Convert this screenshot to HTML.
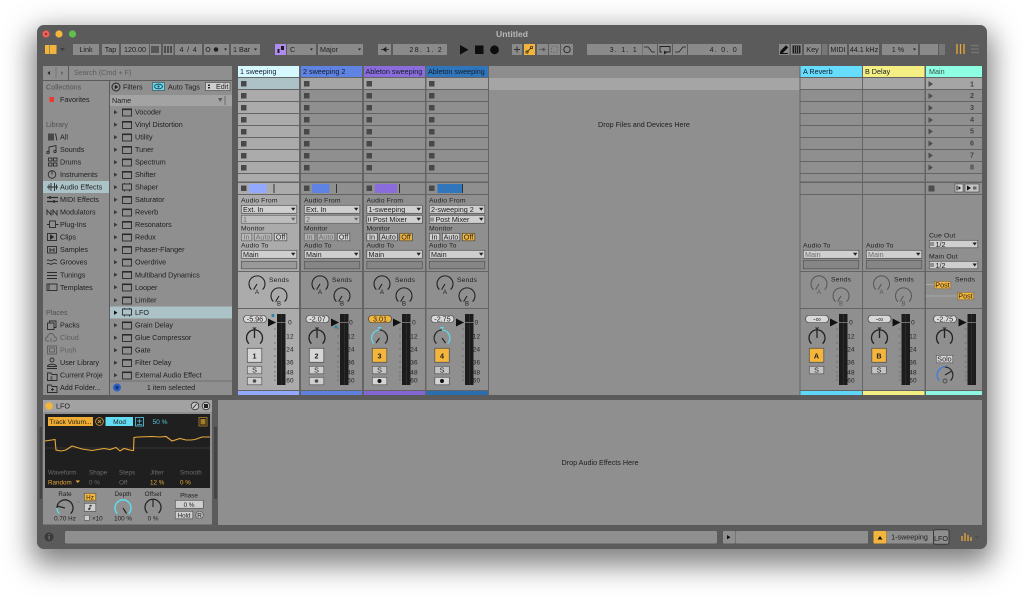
<!DOCTYPE html>
<html><head><meta charset="utf-8"><title>Untitled</title>
<style>
html,body{margin:0;padding:0;width:1024px;height:598px;overflow:hidden;background:#fff}
#w{position:absolute;left:37px;top:25px;width:950px;height:524px;border-radius:7px;background:#5b5b5b;box-shadow:0 11px 28px 5px rgba(0,0,0,.5)}
svg{position:absolute;left:0;top:0;filter:blur(.35px)}
text{font-family:"Liberation Sans",sans-serif;font-size:7.2px;fill:#1e1e1e}
.m{text-anchor:middle}.e{text-anchor:end}
.b{font-weight:bold}
.d{fill:#6c6c6c}
.s{font-size:6.8px;fill:#222;letter-spacing:.15px}
.h{font-size:7.2px;fill:#141e2c}
.q{fill:#6c6c6c}
.k{fill:none;stroke:#222;stroke-width:1.1}
.dv text{font-size:6.3px}
</style></head><body>
<div id="w"></div>
<svg width="1024" height="598" viewBox="0 0 1024 598" xmlns="http://www.w3.org/2000/svg">
<defs>
<g id="di"><rect x="0.5" y="0.5" width="9" height="7" fill="none" stroke="#2a2a2a" stroke-width=".9"/><rect x="0" y="0" width="10" height="1.6" fill="#2a2a2a"/></g>
<g id="dp"><rect x="0.5" y="1" width="9" height="6" fill="none" stroke="#2a2a2a" stroke-width=".9"/><path d="M2.5 0v1M7.5 0v1M2.5 7v1.5M7.5 7v1.5" stroke="#2a2a2a" stroke-width=".9"/></g>
<path id="tr" d="M0 0l3.5 2.2L0 4.400z" fill="#3a3a3a"/>
<g id="dd"><rect x=".3" y=".3" width="55.500" height="8" fill="#cfcfcf" stroke="#4f4f4f" stroke-width=".7"/><path d="M50 2.700h4.400l-2.200 3z" fill="#1f1f1f"/></g>
<g id="dds"><rect x=".3" y=".3" width="48.500" height="7.500" fill="#cfcfcf" stroke="#4f4f4f" stroke-width=".7"/><path d="M43.500 2.500h4.400l-2.200 3z" fill="#1f1f1f"/></g>
<g id="ddo"><rect x=".3" y=".3" width="55.500" height="8" fill="#bdbdbd" stroke="#666" stroke-width=".7"/><path d="M50 2.700h4.400l-2.200 3z" fill="#666"/></g>
<g id="send"><path class="k" d="M-5.600 5.600A8 8 0 1 1 5.600 5.600"/><path d="M0 0L-3.400 5.600" stroke="#222" stroke-width="1.100"/></g>
<g id="sendg"><path d="M-5.600 5.600A8 8 0 1 1 5.600 5.600" fill="none" stroke="#555" stroke-width="1"/><path d="M0 0L-3.400 5.600" stroke="#555" stroke-width="1"/></g>
<g id="pan"><path class="k" d="M-5.600 5.600A8 8 0 1 1 5.600 5.600" style="stroke-width:1.300"/><path d="M0 0V-8" stroke="#222" stroke-width="1.300"/><path d="M-2.200 -10.500h4.400l-2.200 2.200z" fill="#2a2a2a"/></g>
<g id="mt"><rect x="0" y="0" width="8.500" height="71" fill="#1c1c1c"/><rect x="4" y="0" width=".5" height="71" fill="#3a3a3a"/><rect x="0" y="8" width="8.500" height=".9" fill="#777"/><path d="M-3 8.500h2M-3 15h2M-3 22h2M-3 29h2M-3 35h2M-3 42h2M-3 48h2M-3 53h2M-3 58h2M-3 62h2M-3 66h2" stroke="#666" stroke-width=".7"/><path d="M-9 4.500l8 4-8 4z" fill="#111"/></g>
<path id="t2" d="M0 0l4.500 3L0 6z" fill="#4d4d4d"/>
</defs>

<!-- title -->
<circle cx="46" cy="34" r="3.600" fill="#ee5f55"/><circle cx="46" cy="34" r="1" fill="#8a2018"/>
<circle cx="59" cy="34" r="3.600" fill="#f4b73d"/><circle cx="72.500" cy="34" r="3.600" fill="#5fc04c"/>
<text x="512" y="37" class="m b" style="font-size:8.600px;fill:#b9b9b9">Untitled</text>

<!-- toolbar -->
<g fill="#8a8a8a">
<rect x="73" y="44" width="26" height="11"/><rect x="102" y="44" width="17" height="11"/><rect x="121" y="44" width="28" height="11"/><rect x="150" y="44" width="11" height="11"/><rect x="163" y="44" width="10.500" height="11"/><rect x="175" y="44" width="27" height="11"/><rect x="204" y="44" width="25" height="11"/><rect x="231" y="44" width="29" height="11"/>
<rect x="287" y="44" width="29" height="11"/><rect x="318" y="44" width="45" height="11"/><rect x="378" y="44" width="13" height="11"/><rect x="393" y="44" width="54" height="11"/>
<rect x="512" y="44" width="10" height="11"/><rect x="537" y="44" width="11" height="11"/><rect x="549" y="44" width="11" height="11"/><rect x="561" y="44" width="12" height="11"/>
<rect x="587" y="44" width="55" height="11"/><rect x="642.500" y="44" width="14.500" height="11"/><rect x="658" y="44" width="14" height="11"/><rect x="673" y="44" width="14" height="11"/><rect x="688" y="44" width="54" height="11"/>
<rect x="779" y="44" width="10.500" height="11"/><rect x="791" y="44" width="11" height="11"/><rect x="804" y="44" width="17" height="11"/><rect x="822" y="44" width="5.500" height="11" fill="#777"/><rect x="829" y="44" width="18" height="11"/><rect x="849" y="44" width="30" height="11"/><rect x="882" y="44" width="36" height="11"/><rect x="920" y="44" width="18" height="11"/><rect x="939" y="44" width="6" height="11" fill="#777"/>
</g>
<rect x="45" y="45" width="4.500" height="9" fill="#f1b43c"/><rect x="50" y="45" width="6.500" height="9" fill="#f1b43c"/>
<path d="M60 48h5l-2.500 3z" fill="#3f3f3f"/>
<text x="86" y="52" class="m">Link</text><text x="110.500" y="52" class="m">Tap</text><text x="135" y="52" class="m">120.00</text>
<path d="M152 46v7M154 46v7M156 46v7M158 46v7" stroke="#222" stroke-width="1"/><path d="M165 46v7M168 46v7M171 46v7" stroke="#222" stroke-width="1.200"/>
<text x="188.500" y="52" class="m" style="letter-spacing:.8px">4 / 4</text>
<circle cx="208" cy="49.500" r="2" fill="none" stroke="#222" stroke-width=".8"/><circle cx="216" cy="49.500" r="2.300" fill="#222"/><path d="M224 48.500h3l-1.500 2z" fill="#222"/>
<text x="233" y="52">1 Bar</text><path d="M254 48.500h3l-1.500 2z" fill="#222"/>
<rect x="275" y="44" width="11" height="11" fill="#b18cf0"/><path d="M277.500 49h2v4h-2zM281 46h3v4h-3z" fill="#1c1c1c"/>
<text x="290" y="52">C</text><path d="M310 48.500h3l-1.500 2z" fill="#222"/><text x="320" y="52">Major</text><path d="M358 48.500h3l-1.500 2z" fill="#222"/>
<path d="M381 49.500h8M386 47.500l-3 2 3 2z" stroke="#222" stroke-width=".8" fill="#222"/>
<text x="443" y="52" class="e" style="letter-spacing:1.200px">28. 1. 2</text>
<path d="M460 45l8.500 4.800-8.500 4.800z" fill="#0e0e0e"/><rect x="475" y="45.500" width="8.500" height="8.500" fill="#0e0e0e"/><circle cx="494.500" cy="49.800" r="4.400" fill="#0e0e0e"/>
<path d="M514 49.500h6M517 46.500v6" stroke="#333" stroke-width="1"/>
<rect x="524" y="44" width="11" height="11" fill="#f1b43c"/><path d="M527 52l4-4" stroke="#222" stroke-width=".8"/><circle cx="527" cy="52" r="1.200" fill="none" stroke="#222" stroke-width=".7"/><circle cx="531.500" cy="47.500" r="1.200" fill="none" stroke="#222" stroke-width=".7"/>
<path d="M539 49.500h7M542 49.500l2-1.500v3z" stroke="#555" stroke-width=".8" fill="#555"/>
<rect x="551.500" y="46.500" width="6" height="6" fill="none" stroke="#666" stroke-width=".8" stroke-dasharray="1.500 1.500"/>
<circle cx="567" cy="49.500" r="3.200" fill="none" stroke="#222" stroke-width=".9"/>
<text x="638" y="52" class="e" style="letter-spacing:1.200px">3. 1. 1</text>
<path d="M644 47h4l4 5h3" fill="none" stroke="#222" stroke-width=".8"/>
<path d="M665 52h5v-5.500h-10v5.500h2" fill="none" stroke="#222" stroke-width=".9"/><path d="M664 50.500v4l3-2z" fill="#222"/>
<path d="M675 52h4l4-5h3" fill="none" stroke="#222" stroke-width=".8"/>
<text x="738" y="52" class="e" style="letter-spacing:1.200px">4. 0. 0</text>
<path d="M781 51l5-5 1.500 1.500-5 5-2 .5zM780 53.500h8" stroke="#111" stroke-width="1" fill="#111"/>
<rect x="792.500" y="45.500" width="8" height="8" fill="#1c1c1c"/><path d="M794.500 46v7M796.500 46v7M798.500 46v7" stroke="#9a9a9a" stroke-width=".6"/>
<text x="812.500" y="52" class="m">Key</text><text x="838" y="52" class="m">MIDI</text><text x="864" y="52" class="m">44.1 kHz</text>
<text x="898" y="52" class="m">1 %</text><path d="M913 48.500h3l-1.500 2z" fill="#222"/>
<path d="M957 44v10M960.500 44v10M964 44v10" stroke="#e8a93a" stroke-width="1.300"/>
<path d="M971 45.500h8M971 49h8M971 52.500h8" stroke="#767676" stroke-width="1.300"/>

<!-- browser -->
<rect x="43" y="66" width="25" height="14" fill="#8f8f8f"/><rect x="69" y="66" width="163" height="14" fill="#8f8f8f"/>
<path d="M50 71l-2.500 2 2.500 2z" fill="#222"/><path d="M56 67v11" stroke="#6a6a6a" stroke-width=".7"/><path d="M61 71l2.500 2-2.500 2z" fill="#666"/>
<text x="74" y="75" style="fill:#5d5d5d">Search (Cmd + F)</text>
<rect x="43" y="81" width="66" height="314" fill="#8f8f8f"/><rect x="110" y="81" width="122" height="314" fill="#8f8f8f"/>
<circle cx="116" cy="87" r="4" fill="none" stroke="#222" stroke-width=".9"/><path d="M114.800 84.800l3.500 2.200-3.500 2.200z" fill="#222"/>
<text x="123" y="89.500">Filters</text>
<rect x="152.500" y="82.500" width="12" height="8" fill="#63d8ee" stroke="#444" stroke-width=".6"/><ellipse cx="158.500" cy="86.500" rx="4" ry="2.300" fill="none" stroke="#234" stroke-width=".8"/><circle cx="158.500" cy="86.500" r="1" fill="#234"/>
<text x="168" y="89.500">Auto Tags</text>
<rect x="205.500" y="82.500" width="24.500" height="8" fill="#cfcfcf" stroke="#444" stroke-width=".6"/><path d="M208 84.500h2v1.500h-2zM208 87h2v1.500h-2z" fill="#222"/><text x="216" y="89">Edit</text>
<rect x="110" y="95" width="122" height="11" fill="#a3a3a3"/><text x="112" y="103">Name</text>
<path d="M218 98h4.500l-2.250 4z" fill="#5c5c5c"/><path d="M225 96v9" stroke="#555" stroke-width=".7"/>

<rect x="43" y="181" width="66" height="12" fill="#abc2c6"/>
<rect x="110" y="306.500" width="122" height="12" fill="#abc2c6"/>
<path d="M110 381h122" stroke="#666" stroke-width=".8"/>

<text x="46" y="89.500" style="fill:#505050">Collections</text>
<rect x="49.500" y="97" width="4.500" height="5" fill="#ee3a2e"/>
<text x="60" y="102">Favorites</text>
<text x="46" y="127" style="fill:#505050">Library</text>
<text x="60" y="139.500">All</text><text x="60" y="152">Sounds</text><text x="60" y="164.500">Drums</text><text x="60" y="177">Instruments</text><text x="60" y="189.500">Audio Effects</text><text x="60" y="202">MIDI Effects</text><text x="60" y="214.500">Modulators</text><text x="60" y="227">Plug-Ins</text><text x="60" y="239.500">Clips</text><text x="60" y="252">Samples</text><text x="60" y="264.500">Grooves</text><text x="60" y="277.500">Tunings</text><text x="60" y="290">Templates</text>
<text x="46" y="315" style="fill:#505050">Places</text>
<text x="60" y="327.500">Packs</text><text x="60" y="340" style="fill:#5f5f5f">Cloud</text><text x="60" y="352.500" style="fill:#5f5f5f">Push</text><text x="60" y="365">User Library</text><text x="60" y="377.500">Current Proje</text><text x="60" y="390">Add Folder...</text>

<!-- sidebar icons -->
<g fill="none" stroke="#2a2a2a" stroke-width=".9">
<path d="M49 133.500v7M51 133.500v7M53 133.500v7" stroke-width="1.400"/><path d="M55.500 133.500l1.500 7"/>
<path d="M49 152.500v-5.500l7-1.500v6"/><circle cx="48" cy="152.500" r="1.200"/><circle cx="55" cy="151.500" r="1.200"/>
<rect x="48.500" y="158" width="3.500" height="3"/><rect x="53.500" y="158" width="3.500" height="3"/><rect x="48.500" y="163" width="3.500" height="3"/><rect x="53.500" y="163" width="3.500" height="3"/>
<circle cx="52" cy="174.500" r="3.800"/><path d="M52 171v3.500"/>
<path d="M47 187h11M49 184.500v5M51 183v8M54.500 183v8M56.500 184.500v5"/>
<path d="M47 197.500h11M47 201.500h11" stroke-width="1.300"/><path d="M50 196v3M54 200v3" stroke-width="1.300"/>
<path d="M47 215v-5l4 5v-5M53 215v-5l4 5v-5"/>
<rect x="49.500" y="221" width="6" height="6.500"/><path d="M47 224.500h2.500M55.500 224.500h3"/>
<rect x="47.500" y="233.500" width="9" height="7"/><path d="M50.500 235l3 2-3 2z" fill="#2a2a2a"/>
<rect x="47.500" y="246.500" width="9" height="6.500"/><path d="M50 250h4M50 248v4M54 248v4"/>
<path d="M47 260.500c2-2 3 1.500 5 0s3-1 5 0M47 264c2-2 3 1.500 5 0s3-1 5 0"/>
<path d="M47 272.500h10M47 275.500h10M47 278.500h10"/>
<rect x="47" y="284" width="10" height="6.500"/><path d="M49 284v6.500"/>
<rect x="47.500" y="323" width="6.500" height="6.500"/><path d="M49.500 323v-2h6.500v6.500h-2"/>
<g stroke="#5c5c5c"><path d="M49 341h-1.500a2 2 0 0 1 0-4 3.500 3.500 0 0 1 7 0 2 2 0 0 1 0 4h-1.500M51 338v4"/><rect x="47.500" y="346" width="9" height="8"/><rect x="49.500" y="348" width="5" height="4"/></g>
<circle cx="52" cy="360" r="2"/><path d="M47.500 366.500c0-3 9-3 9 0zM47 368.500h10"/>
<path d="M47.500 373h3.500l1 1.500h5v6h-9.500z"/><path d="M50.500 377h2M50.500 379h2"/>
<path d="M47.500 385h3.500l1 1.500h5v6h-9.500z"/><path d="M52.500 388v3M51 389.500h3"/>
</g>

<!-- browser list -->
<use href="#tr" x="114" y="110"/><use href="#di" x="122" y="108.500"/><text x="135" y="114.500">Vocoder</text>
<use href="#tr" x="114" y="122.500"/><use href="#di" x="122" y="121"/><text x="135" y="127">Vinyl Distortion</text>
<use href="#tr" x="114" y="135"/><use href="#di" x="122" y="133.500"/><text x="135" y="139.500">Utility</text>
<use href="#tr" x="114" y="147.500"/><use href="#di" x="122" y="146"/><text x="135" y="152">Tuner</text>
<use href="#tr" x="114" y="160"/><use href="#di" x="122" y="158.500"/><text x="135" y="164.500">Spectrum</text>
<use href="#tr" x="114" y="172.500"/><use href="#di" x="122" y="171"/><text x="135" y="177">Shifter</text>
<use href="#tr" x="114" y="185"/><use href="#dp" x="122" y="183"/><text x="135" y="189.500">Shaper</text>
<use href="#tr" x="114" y="197.500"/><use href="#di" x="122" y="196"/><text x="135" y="202">Saturator</text>
<use href="#tr" x="114" y="210"/><use href="#di" x="122" y="208.500"/><text x="135" y="214.500">Reverb</text>
<use href="#tr" x="114" y="222.500"/><use href="#di" x="122" y="221"/><text x="135" y="227">Resonators</text>
<use href="#tr" x="114" y="235"/><use href="#di" x="122" y="233.500"/><text x="135" y="239.500">Redux</text>
<use href="#tr" x="114" y="247.500"/><use href="#di" x="122" y="246"/><text x="135" y="252">Phaser-Flanger</text>
<use href="#tr" x="114" y="260"/><use href="#di" x="122" y="258.500"/><text x="135" y="264.500">Overdrive</text>
<use href="#tr" x="114" y="272.500"/><use href="#di" x="122" y="271"/><text x="135" y="277.500">Multiband Dynamics</text>
<use href="#tr" x="114" y="285"/><use href="#di" x="122" y="283.500"/><text x="135" y="290">Looper</text>
<use href="#tr" x="114" y="298"/><use href="#di" x="122" y="296.500"/><text x="135" y="302.500">Limiter</text>
<path d="M114 310.500l3.500 2.200-3.500 2.200z" fill="#111"/><use href="#dp" x="122" y="308"/><text x="135" y="315">LFO</text>
<use href="#tr" x="114" y="323"/><use href="#di" x="122" y="321.500"/><text x="135" y="327.500">Grain Delay</text>
<use href="#tr" x="114" y="335.500"/><use href="#di" x="122" y="334"/><text x="135" y="340">Glue Compressor</text>
<use href="#tr" x="114" y="348"/><use href="#di" x="122" y="346.500"/><text x="135" y="352.500">Gate</text>
<use href="#tr" x="114" y="360.500"/><use href="#di" x="122" y="359"/><text x="135" y="365">Filter Delay</text>
<use href="#tr" x="114" y="373"/><use href="#di" x="122" y="371.500"/><text x="135" y="377.500">External Audio Effect</text>
<circle cx="117" cy="387.500" r="4" fill="#2b62c4"/><circle cx="117" cy="387.500" r="1.800" fill="#16377c"/>
<text x="171" y="390" class="m">1 item selected</text>

<!-- session base -->
<rect x="238" y="66" width="744" height="329" fill="#646464"/>
<rect x="489" y="66" width="310.500" height="329" fill="#8f8f8f"/>
<rect x="489" y="66" width="310.500" height="12" fill="#8d8d8d"/><rect x="489" y="78" width="310.500" height="12" fill="#a5a5a5"/>
<text x="644" y="127" class="m">Drop Files and Devices Here</text>

<!-- T1 -->
<g>
<rect x="238" y="66" width="61" height="11" fill="#d6f8ff"/><text x="240" y="74" class="h">1 sweeping</text>
<rect x="238" y="78" width="61" height="11" fill="#acc2c6"/>
<g fill="#ababab"><rect x="238" y="90" width="61" height="11"/><rect x="238" y="102" width="61" height="11"/><rect x="238" y="114" width="61" height="11"/><rect x="238" y="126" width="61" height="11"/><rect x="238" y="138" width="61" height="11"/><rect x="238" y="150" width="61" height="11"/><rect x="238" y="162" width="61" height="11"/><rect x="238" y="174" width="61" height="7.500"/><rect x="238" y="183" width="61" height="11"/><rect x="238" y="195" width="61" height="76"/><rect x="238" y="272" width="61" height="36"/><rect x="238" y="309" width="61" height="81"/></g>
<g fill="#484848"><rect x="241" y="81" width="5.500" height="5.500"/><rect x="241" y="93" width="5.500" height="5.500"/><rect x="241" y="105" width="5.500" height="5.500"/><rect x="241" y="117" width="5.500" height="5.500"/><rect x="241" y="129" width="5.500" height="5.500"/><rect x="241" y="141" width="5.500" height="5.500"/><rect x="241" y="153" width="5.500" height="5.500"/><rect x="241" y="165" width="5.500" height="5.500"/><rect x="241" y="185.500" width="5.500" height="5.500"/></g>
<rect x="249" y="184" width="17.500" height="9" fill="#93a8ff"/><rect x="273.500" y="184" width="1" height="9" fill="#333"/>
<text x="241" y="202.500" class="s">Audio From</text><use href="#dd" x="241" y="205"/><text x="243" y="212">Ext. In</text>
<use href="#ddo" x="241" y="215"/><text x="243" y="222" class="d">1</text>
<text x="241" y="230.500" class="s">Monitor</text>
<rect x="241.300" y="233.300" width="10.500" height="7.500" fill="#b9b9b9" stroke="#666" stroke-width=".7"/><text x="246.500" y="239.500" class="m d">In</text>
<rect x="254.300" y="233.300" width="17.500" height="7.500" fill="#b9b9b9" stroke="#666" stroke-width=".7"/><text x="263" y="239.500" class="m d">Auto</text>
<rect x="274.300" y="233.300" width="12.500" height="7.500" fill="#d4d4d4" stroke="#444" stroke-width=".7"/><text x="280.500" y="239.500" class="m">Off</text>
<text x="241" y="247.500" class="s">Audio To</text><use href="#dd" x="241" y="250"/><text x="243" y="257">Main</text>
<rect x="241.300" y="261.300" width="55.500" height="7.500" fill="#999" stroke="#555" stroke-width=".7"/>
<use href="#send" x="257" y="284"/><text x="257" y="294" class="m" style="font-size:6px">A</text>
<text x="279" y="282" class="m s">Sends</text>
<use href="#send" x="279" y="296"/><text x="279" y="305.500" class="m" style="font-size:6px">B</text>
<rect x="243.500" y="315.300" width="23" height="7.400" rx="3.700" fill="#d8d8d8" stroke="#444" stroke-width=".7"/><text x="255" y="321.500" class="m">-5.96</text>
<use href="#mt" x="277" y="314"/>
<circle cx="273" cy="315.500" r="1.600" fill="#2a86ad"/>
<text x="290" y="324.500" class="m s" style="font-size:6.400px">0</text><text x="290" y="338.500" class="m s" style="font-size:6.400px">12</text><text x="290" y="351.500" class="m s" style="font-size:6.400px">24</text><text x="290" y="364.500" class="m s" style="font-size:6.400px">36</text><text x="290" y="374.500" class="m s" style="font-size:6.400px">48</text><text x="290" y="382.500" class="m s" style="font-size:6.400px">60</text>
<use href="#pan" x="254.500" y="338"/>
<rect x="247.300" y="348.300" width="14.500" height="14" fill="#d6d6d6" stroke="#555" stroke-width=".8"/><text x="254.500" y="358.500" class="m b">1</text>
<rect x="247.300" y="366.300" width="14.500" height="7.500" fill="#cfcfcf" stroke="#555" stroke-width=".7"/><text x="254.500" y="372.500" class="m">S</text>
<rect x="247.300" y="377.300" width="14.500" height="7.500" fill="#cfcfcf" stroke="#555" stroke-width=".7"/><circle cx="254.500" cy="381" r="1.800" fill="#4d4d4d"/>
<rect x="238" y="391" width="61" height="4" fill="#93a8ff"/>
</g>

<!-- T2 -->
<g>
<rect x="301" y="66" width="61" height="11" fill="#5f83e2"/><text x="303" y="74" class="h">2 sweeping 2</text>
<rect x="301" y="78" width="61" height="11" fill="#a5a5a5"/>
<g fill="#8f8f8f"><rect x="301" y="90" width="61" height="11"/><rect x="301" y="102" width="61" height="11"/><rect x="301" y="114" width="61" height="11"/><rect x="301" y="126" width="61" height="11"/><rect x="301" y="138" width="61" height="11"/><rect x="301" y="150" width="61" height="11"/><rect x="301" y="162" width="61" height="11"/><rect x="301" y="174" width="61" height="7.500"/><rect x="301" y="183" width="61" height="11"/><rect x="301" y="195" width="61" height="76"/><rect x="301" y="272" width="61" height="36"/><rect x="301" y="309" width="61" height="81"/></g>
<g fill="#484848"><rect x="304" y="81" width="5.500" height="5.500"/><rect x="304" y="93" width="5.500" height="5.500"/><rect x="304" y="105" width="5.500" height="5.500"/><rect x="304" y="117" width="5.500" height="5.500"/><rect x="304" y="129" width="5.500" height="5.500"/><rect x="304" y="141" width="5.500" height="5.500"/><rect x="304" y="153" width="5.500" height="5.500"/><rect x="304" y="165" width="5.500" height="5.500"/><rect x="304" y="185.500" width="5.500" height="5.500"/></g>
<rect x="312" y="184" width="17.500" height="9" fill="#5f83e2"/><rect x="336" y="184" width="1" height="9" fill="#333"/>
<text x="304" y="202.500" class="s">Audio From</text><use href="#dd" x="304" y="205"/><text x="306" y="212">Ext. In</text>
<use href="#ddo" x="304" y="215"/><text x="306" y="222" class="d">2</text>
<text x="304" y="230.500" class="s">Monitor</text>
<rect x="304.300" y="233.300" width="10.500" height="7.500" fill="#b0b0b0" stroke="#666" stroke-width=".7"/><text x="309.500" y="239.500" class="m d">In</text>
<rect x="317.300" y="233.300" width="17.500" height="7.500" fill="#b0b0b0" stroke="#666" stroke-width=".7"/><text x="326" y="239.500" class="m d">Auto</text>
<rect x="337.300" y="233.300" width="12.500" height="7.500" fill="#d4d4d4" stroke="#444" stroke-width=".7"/><text x="343.500" y="239.500" class="m">Off</text>
<text x="304" y="247.500" class="s">Audio To</text><use href="#dd" x="304" y="250"/><text x="306" y="257">Main</text>
<rect x="304.300" y="261.300" width="55.500" height="7.500" fill="#868686" stroke="#555" stroke-width=".7"/>
<use href="#send" x="320" y="284"/><text x="320" y="294" class="m" style="font-size:6px">A</text>
<text x="342" y="282" class="m s">Sends</text>
<use href="#send" x="342" y="296"/><text x="342" y="305.500" class="m" style="font-size:6px">B</text>
<rect x="306" y="315.300" width="23" height="7.400" rx="3.700" fill="#d8d8d8" stroke="#444" stroke-width=".7"/><text x="317.500" y="321.500" class="m">-2.07</text>
<use href="#mt" x="340" y="314"/>
<circle cx="336" cy="327" r="1.600" fill="#2a86ad"/>
<text x="351" y="324.500" class="m s" style="font-size:6.400px">0</text><text x="351" y="338.500" class="m s" style="font-size:6.400px">12</text><text x="351" y="351.500" class="m s" style="font-size:6.400px">24</text><text x="351" y="364.500" class="m s" style="font-size:6.400px">36</text><text x="351" y="374.500" class="m s" style="font-size:6.400px">48</text><text x="351" y="382.500" class="m s" style="font-size:6.400px">60</text>
<use href="#pan" x="317" y="338"/>
<rect x="309.300" y="348.300" width="14.500" height="14" fill="#d6d6d6" stroke="#555" stroke-width=".8"/><text x="316.500" y="358.500" class="m b">2</text>
<rect x="309.300" y="366.300" width="14.500" height="7.500" fill="#cfcfcf" stroke="#555" stroke-width=".7"/><text x="316.500" y="372.500" class="m">S</text>
<rect x="309.300" y="377.300" width="14.500" height="7.500" fill="#cfcfcf" stroke="#555" stroke-width=".7"/><circle cx="316.500" cy="381" r="1.800" fill="#4d4d4d"/>
<rect x="301" y="391" width="61" height="4" fill="#5f80dc"/>
</g>

<!-- T3 -->
<g>
<rect x="364" y="66" width="61" height="11" fill="#8a6cdc"/><text x="365.500" y="74" class="h">Ableton sweeping</text>
<rect x="364" y="78" width="61" height="11" fill="#a5a5a5"/>
<g fill="#8f8f8f"><rect x="364" y="90" width="61" height="11"/><rect x="364" y="102" width="61" height="11"/><rect x="364" y="114" width="61" height="11"/><rect x="364" y="126" width="61" height="11"/><rect x="364" y="138" width="61" height="11"/><rect x="364" y="150" width="61" height="11"/><rect x="364" y="162" width="61" height="11"/><rect x="364" y="174" width="61" height="7.500"/><rect x="364" y="183" width="61" height="11"/><rect x="364" y="195" width="61" height="76"/><rect x="364" y="272" width="61" height="36"/><rect x="364" y="309" width="61" height="81"/></g>
<g fill="#484848"><rect x="366.500" y="81" width="5.500" height="5.500"/><rect x="366.500" y="93" width="5.500" height="5.500"/><rect x="366.500" y="105" width="5.500" height="5.500"/><rect x="366.500" y="117" width="5.500" height="5.500"/><rect x="366.500" y="129" width="5.500" height="5.500"/><rect x="366.500" y="141" width="5.500" height="5.500"/><rect x="366.500" y="153" width="5.500" height="5.500"/><rect x="366.500" y="165" width="5.500" height="5.500"/><rect x="366.500" y="185.500" width="5.500" height="5.500"/></g>
<rect x="375" y="184" width="22" height="9" fill="#8a6cdc"/><rect x="399" y="184" width="1" height="9" fill="#333"/>
<text x="366.500" y="202.500" class="s">Audio From</text><use href="#dd" x="366.500" y="205"/><text x="368.500" y="212">1-sweeping</text>
<use href="#dd" x="366.500" y="215"/><path d="M368.500 217.500v4M370.500 217.500v4" stroke="#333" stroke-width=".8"/><text x="373" y="222">Post Mixer</text>
<text x="366.500" y="230.500" class="s">Monitor</text>
<rect x="366.800" y="233.300" width="10.500" height="7.500" fill="#d0d0d0" stroke="#444" stroke-width=".7"/><text x="372" y="239.500" class="m">In</text>
<rect x="379.800" y="233.300" width="17.500" height="7.500" fill="#d0d0d0" stroke="#444" stroke-width=".7"/><text x="388.500" y="239.500" class="m">Auto</text>
<rect x="399.800" y="233.300" width="12.500" height="7.500" fill="#f3b53c" stroke="#444" stroke-width=".7"/><text x="406" y="239.500" class="m">Off</text>
<text x="366.500" y="247.500" class="s">Audio To</text><use href="#dd" x="366.500" y="250"/><text x="368.500" y="257">Main</text>
<rect x="366.800" y="261.300" width="55.500" height="7.500" fill="#868686" stroke="#555" stroke-width=".7"/>
<use href="#send" x="382" y="284"/><text x="382" y="294" class="m" style="font-size:6px">A</text>
<text x="405" y="282" class="m s">Sends</text>
<use href="#send" x="404" y="296"/><text x="404" y="305.500" class="m" style="font-size:6px">B</text>
<rect x="368.500" y="315.300" width="23" height="7.400" rx="3.700" fill="#f3b53c" stroke="#444" stroke-width=".7"/><text x="380" y="321.500" class="m">3.01</text>
<use href="#mt" x="402" y="314"/>
<text x="414" y="324.500" class="m s" style="font-size:6.400px">0</text><text x="414" y="338.500" class="m s" style="font-size:6.400px">12</text><text x="414" y="351.500" class="m s" style="font-size:6.400px">24</text><text x="414" y="364.500" class="m s" style="font-size:6.400px">36</text><text x="414" y="374.500" class="m s" style="font-size:6.400px">48</text><text x="414" y="382.500" class="m s" style="font-size:6.400px">60</text>
<path d="M373.900 343.600A8 8 0 0 1 379.500 330" fill="none" stroke="#5fdcf0" stroke-width="1.300"/><path d="M379.500 330A8 8 0 0 1 385.100 343.600" fill="none" stroke="#262626" stroke-width="1.300"/><path d="M379.500 338l-3.500 5" stroke="#262626" stroke-width="1.200"/><path d="M377.300 327h4.400l-2.200 2.200z" fill="#5fdcf0"/>
<rect x="372.300" y="348.300" width="14.500" height="14" fill="#f3b53c" stroke="#555" stroke-width=".8"/><text x="379.500" y="358.500" class="m b">3</text>
<rect x="372.300" y="366.300" width="14.500" height="7.500" fill="#c4c4c4" stroke="#555" stroke-width=".7"/><text x="379.500" y="372.500" class="m">S</text>
<rect x="372.300" y="377.300" width="14.500" height="7.500" fill="#d6d6d6" stroke="#555" stroke-width=".7"/><circle cx="379.500" cy="381" r="2" fill="#111"/>
<rect x="364" y="391" width="61" height="4" fill="#8266d4"/>
</g>

<!-- T4 -->
<g>
<rect x="426.500" y="66" width="61.500" height="11" fill="#2f76bc"/><text x="428" y="74" class="h">Ableton sweeping</text>
<rect x="426.500" y="78" width="61.500" height="11" fill="#a5a5a5"/>
<g fill="#8f8f8f"><rect x="426.500" y="90" width="61.500" height="11"/><rect x="426.500" y="102" width="61.500" height="11"/><rect x="426.500" y="114" width="61.500" height="11"/><rect x="426.500" y="126" width="61.500" height="11"/><rect x="426.500" y="138" width="61.500" height="11"/><rect x="426.500" y="150" width="61.500" height="11"/><rect x="426.500" y="162" width="61.500" height="11"/><rect x="426.500" y="174" width="61.500" height="7.500"/><rect x="426.500" y="183" width="61.500" height="11"/><rect x="426.500" y="195" width="61.500" height="76"/><rect x="426.500" y="272" width="61.500" height="36"/><rect x="426.500" y="309" width="61.500" height="81"/></g>
<g fill="#484848"><rect x="429" y="81" width="5.500" height="5.500"/><rect x="429" y="93" width="5.500" height="5.500"/><rect x="429" y="105" width="5.500" height="5.500"/><rect x="429" y="117" width="5.500" height="5.500"/><rect x="429" y="129" width="5.500" height="5.500"/><rect x="429" y="141" width="5.500" height="5.500"/><rect x="429" y="153" width="5.500" height="5.500"/><rect x="429" y="165" width="5.500" height="5.500"/><rect x="429" y="185.500" width="5.500" height="5.500"/></g>
<rect x="437.500" y="184" width="25" height="9" fill="#2f76bc"/><rect x="462" y="184" width="1" height="9" fill="#333"/>
<text x="429" y="202.500" class="s">Audio From</text><use href="#dd" x="429" y="205"/><text x="431" y="212">2-sweeping 2</text>
<use href="#dd" x="429" y="215"/><path d="M431 217.500v4M433 217.500v4" stroke="#333" stroke-width=".8"/><text x="435.500" y="222">Post Mixer</text>
<text x="429" y="230.500" class="s">Monitor</text>
<rect x="429.300" y="233.300" width="10.500" height="7.500" fill="#d0d0d0" stroke="#444" stroke-width=".7"/><text x="434.500" y="239.500" class="m">In</text>
<rect x="442.300" y="233.300" width="17.500" height="7.500" fill="#d0d0d0" stroke="#444" stroke-width=".7"/><text x="451" y="239.500" class="m">Auto</text>
<rect x="462.300" y="233.300" width="12.500" height="7.500" fill="#f3b53c" stroke="#444" stroke-width=".7"/><text x="468.500" y="239.500" class="m">Off</text>
<text x="429" y="247.500" class="s">Audio To</text><use href="#dd" x="429" y="250"/><text x="431" y="257">Main</text>
<rect x="429.300" y="261.300" width="55.500" height="7.500" fill="#868686" stroke="#555" stroke-width=".7"/>
<use href="#send" x="445" y="284"/><text x="445" y="294" class="m" style="font-size:6px">A</text>
<text x="467" y="282" class="m s">Sends</text>
<use href="#send" x="467" y="296"/><text x="467" y="305.500" class="m" style="font-size:6px">B</text>
<rect x="431" y="315.300" width="23" height="7.400" rx="3.700" fill="#d8d8d8" stroke="#444" stroke-width=".7"/><text x="442.500" y="321.500" class="m">-2.75</text>
<use href="#mt" x="465" y="314"/>
<text x="476.500" y="324.500" class="m s" style="font-size:6.400px">0</text><text x="476.500" y="338.500" class="m s" style="font-size:6.400px">12</text><text x="476.500" y="351.500" class="m s" style="font-size:6.400px">24</text><text x="476.500" y="364.500" class="m s" style="font-size:6.400px">36</text><text x="476.500" y="374.500" class="m s" style="font-size:6.400px">48</text><text x="476.500" y="382.500" class="m s" style="font-size:6.400px">60</text>
<path d="M436.400 343.600A8 8 0 0 1 442 330" fill="none" stroke="#262626" stroke-width="1.300"/><path d="M442 330A8 8 0 0 1 447.600 343.600" fill="none" stroke="#5fdcf0" stroke-width="1.300"/><path d="M442 338l3.500 5" stroke="#262626" stroke-width="1.200"/><path d="M439.800 327h4.400l-2.200 2.200z" fill="#5fdcf0"/>
<rect x="434.800" y="348.300" width="14.500" height="14" fill="#f3b53c" stroke="#555" stroke-width=".8"/><text x="442" y="358.500" class="m b">4</text>
<rect x="434.800" y="366.300" width="14.500" height="7.500" fill="#c4c4c4" stroke="#555" stroke-width=".7"/><text x="442" y="372.500" class="m">S</text>
<rect x="434.800" y="377.300" width="14.500" height="7.500" fill="#d6d6d6" stroke="#555" stroke-width=".7"/><circle cx="442" cy="381" r="2" fill="#111"/>
<rect x="426.500" y="391" width="61.500" height="4" fill="#2b6eb0"/>
</g>

<!-- Return A -->
<g>
<rect x="800.500" y="66" width="61.500" height="11" fill="#66dcff"/><text x="803" y="74" class="h">A Reverb</text>
<rect x="800.500" y="78" width="61.500" height="11" fill="#a5a5a5"/>
<g fill="#8f8f8f"><rect x="800.500" y="90" width="61.500" height="11"/><rect x="800.500" y="102" width="61.500" height="11"/><rect x="800.500" y="114" width="61.500" height="11"/><rect x="800.500" y="126" width="61.500" height="11"/><rect x="800.500" y="138" width="61.500" height="11"/><rect x="800.500" y="150" width="61.500" height="11"/><rect x="800.500" y="162" width="61.500" height="11"/><rect x="800.500" y="174" width="61.500" height="7.500"/><rect x="800.500" y="183" width="61.500" height="11"/><rect x="800.500" y="195" width="61.500" height="76"/><rect x="800.500" y="272" width="61.500" height="36"/><rect x="800.500" y="309" width="61.500" height="81"/></g>
<text x="803" y="247.500" class="s">Audio To</text><use href="#dd" x="803" y="250"/><text x="805" y="257" class="q">Main</text>
<rect x="803.300" y="260.300" width="55.500" height="8.500" fill="#868686" stroke="#555" stroke-width=".7"/>
<use href="#sendg" x="819" y="284"/><text x="819" y="294" class="m" style="font-size:6px;fill:#555">A</text>
<text x="841" y="281.500" class="m s">Sends</text>
<use href="#sendg" x="841" y="296"/><text x="841" y="305.500" class="m" style="font-size:6px;fill:#555">B</text>
<rect x="805.500" y="315.300" width="23" height="7.400" rx="3.700" fill="#d8d8d8" stroke="#444" stroke-width=".7"/><text x="817" y="321.500" class="m">-∞</text>
<use href="#mt" x="839" y="314"/>
<text x="851" y="324.500" class="m s" style="font-size:6.400px">0</text><text x="851" y="338.500" class="m s" style="font-size:6.400px">12</text><text x="851" y="351.500" class="m s" style="font-size:6.400px">24</text><text x="851" y="364.500" class="m s" style="font-size:6.400px">36</text><text x="851" y="374.500" class="m s" style="font-size:6.400px">48</text><text x="851" y="382.500" class="m s" style="font-size:6.400px">60</text>
<use href="#pan" x="817" y="338"/>
<rect x="809.300" y="348.300" width="14.500" height="14" fill="#f3b53c" stroke="#555" stroke-width=".8"/><text x="816.500" y="358.500" class="m b">A</text>
<rect x="809.300" y="366.300" width="14.500" height="7.500" fill="#c4c4c4" stroke="#555" stroke-width=".7"/><text x="816.500" y="372.500" class="m">S</text>
<rect x="800.500" y="391" width="61.500" height="4" fill="#5fd8f8"/>
</g>

<!-- Return B -->
<g>
<rect x="863" y="66" width="61.500" height="11" fill="#f5ee83"/><text x="865" y="74" class="h">B Delay</text>
<rect x="863" y="78" width="61.500" height="11" fill="#a5a5a5"/>
<g fill="#8f8f8f"><rect x="863" y="90" width="61.500" height="11"/><rect x="863" y="102" width="61.500" height="11"/><rect x="863" y="114" width="61.500" height="11"/><rect x="863" y="126" width="61.500" height="11"/><rect x="863" y="138" width="61.500" height="11"/><rect x="863" y="150" width="61.500" height="11"/><rect x="863" y="162" width="61.500" height="11"/><rect x="863" y="174" width="61.500" height="7.500"/><rect x="863" y="183" width="61.500" height="11"/><rect x="863" y="195" width="61.500" height="76"/><rect x="863" y="272" width="61.500" height="36"/><rect x="863" y="309" width="61.500" height="81"/></g>
<text x="866" y="247.500" class="s">Audio To</text><use href="#dd" x="866" y="250"/><text x="868" y="257" class="q">Main</text>
<rect x="866.300" y="260.300" width="55.500" height="8.500" fill="#868686" stroke="#555" stroke-width=".7"/>
<use href="#sendg" x="881.500" y="284"/><text x="881.500" y="294" class="m" style="font-size:6px;fill:#555">A</text>
<text x="904" y="281.500" class="m s">Sends</text>
<use href="#sendg" x="903.500" y="296"/><text x="903.500" y="305.500" class="m" style="font-size:6px;fill:#555">B</text>
<rect x="868" y="315.300" width="23" height="7.400" rx="3.700" fill="#d8d8d8" stroke="#444" stroke-width=".7"/><text x="879.500" y="321.500" class="m">-∞</text>
<use href="#mt" x="901.500" y="314"/>
<text x="913" y="324.500" class="m s" style="font-size:6.400px">0</text><text x="913" y="338.500" class="m s" style="font-size:6.400px">12</text><text x="913" y="351.500" class="m s" style="font-size:6.400px">24</text><text x="913" y="364.500" class="m s" style="font-size:6.400px">36</text><text x="913" y="374.500" class="m s" style="font-size:6.400px">48</text><text x="913" y="382.500" class="m s" style="font-size:6.400px">60</text>
<use href="#pan" x="879.500" y="338"/>
<rect x="871.800" y="348.300" width="14.500" height="14" fill="#f3b53c" stroke="#555" stroke-width=".8"/><text x="879" y="358.500" class="m b">B</text>
<rect x="871.800" y="366.300" width="14.500" height="7.500" fill="#c4c4c4" stroke="#555" stroke-width=".7"/><text x="879" y="372.500" class="m">S</text>
<rect x="863" y="391" width="61.500" height="4" fill="#f5ee83"/>
</g>

<!-- Main -->
<g>
<rect x="926" y="66" width="56" height="11" fill="#8effe2"/><text x="929" y="74" class="h" style="fill:#36504a">Main</text>
<rect x="926" y="78" width="56" height="11" fill="#a5a5a5"/>
<g fill="#8f8f8f"><rect x="926" y="90" width="56" height="11"/><rect x="926" y="102" width="56" height="11"/><rect x="926" y="114" width="56" height="11"/><rect x="926" y="126" width="56" height="11"/><rect x="926" y="138" width="56" height="11"/><rect x="926" y="150" width="56" height="11"/><rect x="926" y="162" width="56" height="11"/><rect x="926" y="174" width="56" height="7.500"/><rect x="926" y="183" width="56" height="11"/><rect x="926" y="195" width="56" height="76"/><rect x="926" y="272" width="56" height="36"/><rect x="926" y="309" width="56" height="81"/></g>
<use href="#t2" x="928.500" y="81"/><text x="972" y="86.500" class="m b" style="fill:#444">1</text>
<use href="#t2" x="928.500" y="93"/><text x="972" y="98" class="m b" style="fill:#444">2</text>
<use href="#t2" x="928.500" y="105"/><text x="972" y="110" class="m b" style="fill:#444">3</text>
<use href="#t2" x="928.500" y="117"/><text x="972" y="122" class="m b" style="fill:#444">4</text>
<use href="#t2" x="928.500" y="128.500"/><text x="972" y="133.500" class="m b" style="fill:#444">5</text>
<use href="#t2" x="928.500" y="140.500"/><text x="972" y="145.500" class="m b" style="fill:#444">6</text>
<use href="#t2" x="928.500" y="152.500"/><text x="972" y="157.500" class="m b" style="fill:#444">7</text>
<use href="#t2" x="928.500" y="164.500"/><text x="972" y="169.500" class="m b" style="fill:#444">8</text>
<rect x="928.500" y="185.500" width="6" height="6" fill="#4d4d4d"/>
<rect x="955" y="184" width="8" height="8" fill="#d4d4d4" stroke="#444" stroke-width=".6"/><path d="M957 185.500v5" stroke="#111" stroke-width="1"/><path d="M958.500 186l2.500 2-2.500 2z" fill="#111"/>
<rect x="965" y="184" width="14" height="8" fill="#c4c4c4" stroke="#444" stroke-width=".6"/><path d="M967 185.500l4 2.500-4 2.500z" fill="#111"/><rect x="973" y="186.500" width="3.500" height="3" fill="#666"/>
<text x="929" y="237.500" class="s">Cue Out</text><use href="#dds" x="929" y="240"/>
<path d="M931 242v4M933 242v4" stroke="#333" stroke-width=".8"/><text x="935.500" y="246.800">1/2</text>
<text x="929" y="258.500" class="s">Main Out</text><use href="#dds" x="929" y="261"/>
<path d="M931 263v4M933 263v4" stroke="#333" stroke-width=".8"/><text x="935.500" y="267.800">1/2</text>
<text x="965" y="281.500" class="m s">Sends</text>
<path d="M926 284.500h8M926 296h31" stroke="#aaa" stroke-width=".9"/>
<rect x="934.300" y="281.300" width="16.500" height="7.500" fill="#f3b53c" stroke="#666" stroke-width=".6"/><text x="942.500" y="287.500" class="m">Post</text>
<rect x="957.300" y="292.300" width="16.500" height="7.500" fill="#f3b53c" stroke="#666" stroke-width=".6"/><text x="965.500" y="298.500" class="m">Post</text>
<rect x="933.500" y="315.300" width="23" height="7.400" rx="3.700" fill="#d8d8d8" stroke="#444" stroke-width=".7"/><text x="945" y="321.500" class="m">-2.75</text>
<use href="#mt" x="967.500" y="314"/>
<use href="#pan" x="944.500" y="338"/>
<rect x="936.300" y="355.300" width="16.500" height="7.500" fill="#d6d6d6" stroke="#555" stroke-width=".7"/><text x="944.500" y="361.500" class="m">Solo</text>
<path d="M939.400 380.600A8 8 0 0 1 945 367" fill="none" stroke="#2f7fe0" stroke-width="1.300"/><path d="M945 367A8 8 0 0 1 950.600 380.600" fill="none" stroke="#262626" stroke-width="1.300"/><path d="M945 375l6-3.500" stroke="#262626" stroke-width="1.200"/><circle cx="945" cy="381" r="2" fill="none" stroke="#333" stroke-width=".7"/>
<rect x="926" y="391" width="56" height="4" fill="#8ef6e0"/>
</g>

<!-- device pane -->
<rect x="39.500" y="427" width="2.500" height="72" fill="#444"/><rect x="214" y="427" width="3" height="72" fill="#444"/>
<rect x="218" y="400" width="764" height="125" fill="#8f8f8f"/>
<text x="600" y="465" class="m">Drop Audio Effects Here</text>
<rect x="43" y="400" width="169" height="124.500" fill="#8f8f8f"/><rect x="43" y="400" width="169" height="12" fill="#a2a2a2"/>
<circle cx="49" cy="406" r="3.800" fill="#f3b53c"/>
<text x="56" y="408.500">LFO</text>
<circle cx="195" cy="406" r="3.800" fill="#c8c8c8" stroke="#333" stroke-width=".8"/><path d="M193 408l3.500-4" stroke="#222" stroke-width=".8"/>
<circle cx="206" cy="406" r="3.800" fill="#c8c8c8" stroke="#333" stroke-width=".8"/><rect x="204" y="404" width="4" height="4" fill="#222"/>
<rect x="45" y="414" width="165" height="74" fill="#1f1f1f"/>
<g class="dv">
<rect x="48" y="417" width="45" height="9" fill="#f0ad33"/><text x="70.500" y="424" class="m" style="font-size:6.600px">Track Volum...</text>
<circle cx="99.500" cy="421.500" r="3.900" fill="none" stroke="#dca23a" stroke-width=".8"/><path d="M97.800 419.800l3.400 3.400M101.200 419.800l-3.400 3.400" stroke="#dca23a" stroke-width=".8"/>
<rect x="105.500" y="417" width="27.500" height="9" fill="#63dcf4"/><text x="119.500" y="424" class="m" style="font-size:6.600px">Mod</text>
<rect x="135.500" y="417.500" width="8" height="8.500" fill="none" stroke="#54bcd4" stroke-width=".9"/><path d="M137 421h5M139.500 419v4.500M137 424.500h5" stroke="#54bcd4" stroke-width=".8"/>
<text x="160" y="424" class="m" style="fill:#57c8de;font-size:6.600px">50 %</text>
<rect x="199" y="417.500" width="8" height="8.500" fill="none" stroke="#a27a2b" stroke-width=".9"/><rect x="200.500" y="419" width="5" height="5.500" fill="#a27a2b"/>
<path d="M45 448h165" stroke="#3f3f3f" stroke-width=".8"/>
<path d="M45 441L55 439.500L56 450L61 451L66 450L72 446L82 449L92 450.500L98 449.500L104 448.500L110 449.500L116 447.500L120 451L124 448.500L132 450.500L133.500 450.500L134 437.500L138 437L152 436.500L160 437L166 436.500L172 441L180 438.500L186 440L191 440L195 439.500L202 437L210 437" fill="none" stroke="#e8a93a" stroke-width="1.100"/>
<text x="48" y="474.500" style="fill:#6d6d6d">Waveform</text><text x="89" y="474.500" style="fill:#6d6d6d">Shape</text><text x="119" y="474.500" style="fill:#6d6d6d">Steps</text><text x="150" y="474.500" style="fill:#6d6d6d">Jitter</text><text x="180" y="474.500" style="fill:#6d6d6d">Smooth</text>
<text x="48" y="484.500" style="fill:#e8a93a">Random</text><path d="M75.500 480.500h4.500l-2.250 2.500z" fill="#e8a93a"/>
<text x="89" y="484.500" style="fill:#6d6d6d">0 %</text><text x="119" y="484.500" style="fill:#6d6d6d">Off</text><text x="150" y="484.500" style="fill:#e8a93a">12 %</text><text x="180" y="484.500" style="fill:#e8a93a">0 %</text>
<text x="65" y="496" class="m">Rate</text>
<path d="M59.400 513.600A8 8 0 0 1 57 508" fill="none" stroke="#5fdcf0" stroke-width="1.300"/><path d="M57 508A8 8 0 1 1 70.600 513.600" fill="none" stroke="#262626" stroke-width="1.300"/><path d="M65 508L57 506" stroke="#262626" stroke-width="1.200"/>
<text x="65" y="520.500" class="m">0.70 Hz</text>
<path d="M76.500 502h3.500" stroke="#777" stroke-width=".8"/>
<rect x="84.300" y="493.300" width="11.500" height="7.500" fill="#f3b53c" stroke="#555" stroke-width=".7"/><text x="90" y="499.500" class="m">Hz</text>
<rect x="84.300" y="503.300" width="11.500" height="8" fill="#cfcfcf" stroke="#555" stroke-width=".7"/><path d="M90 505v4" stroke="#222" stroke-width=".8"/><circle cx="89.200" cy="509" r="1" fill="#222"/><path d="M90 505l1.800 1" stroke="#222" stroke-width=".8"/>
<rect x="84.300" y="515.300" width="5" height="5" fill="#cfcfcf" stroke="#555" stroke-width=".6"/><text x="92" y="520.500">×10</text>
<text x="123" y="496" class="m">Depth</text>
<path d="M117.400 513.600A8 8 0 1 1 128.600 513.600" fill="none" stroke="#5fdcf0" stroke-width="1.400"/><path d="M123 508l3.500 5.500" stroke="#262626" stroke-width="1.200"/>
<text x="123" y="520.500" class="m">100 %</text>
<text x="153" y="496" class="m">Offset</text>
<path d="M147.400 513A8 8 0 1 1 158.600 513" fill="none" stroke="#262626" stroke-width="1.300"/><path d="M153 507V499" stroke="#262626" stroke-width="1.200"/>
<text x="153" y="520.500" class="m">0 %</text>
<text x="189" y="497.500" class="m">Phase</text>
<rect x="175.300" y="500.300" width="28" height="8" fill="#cfcfcf" stroke="#555" stroke-width=".7"/><text x="189" y="506.800" class="m">0 %</text>
<rect x="175.300" y="511.300" width="17.500" height="7.500" fill="#cfcfcf" stroke="#555" stroke-width=".7"/><text x="184" y="517.500" class="m">Hold</text>
<circle cx="199.500" cy="515" r="3.800" fill="#bbb" stroke="#555" stroke-width=".7"/><text x="199.500" y="517.300" class="m">R</text>
</g>

<!-- status bar -->
<circle cx="49" cy="537" r="4.500" fill="#3a3a3a"/><rect x="48.500" y="536" width="1.200" height="3.500" fill="#777"/><rect x="48.500" y="534" width="1.200" height="1.200" fill="#777"/>
<rect x="65" y="531" width="652" height="12.500" rx="1.500" fill="#8f8f8f"/>
<rect x="723" y="531" width="12.500" height="12.500" rx="1" fill="#8f8f8f"/><path d="M727 535l3.500 2.200-3.500 2.200z" fill="#111"/>
<rect x="736" y="531" width="132" height="12.500" rx="1" fill="#8f8f8f"/>
<rect x="873.500" y="531" width="13" height="12.500" rx="1" fill="#f3b53c"/><path d="M877.500 539.500l2.500-3.500 2.500 3.500z" fill="#111"/>
<rect x="887" y="531" width="46" height="12.500" fill="#8f8f8f"/><text x="909.500" y="539.500" class="m">1-sweeping</text>
<rect x="933.500" y="529.800" width="15.500" height="14.500" rx="2" fill="#8f8f8f" stroke="#3a3a3a" stroke-width="1"/><text x="941" y="541" class="m">LFO</text>
<path d="M962 541v-5M965 541v-8M968 541v-6M971 541v-4" stroke="#e8a93a" stroke-width="1.300"/><path d="M975 536.500h4l-2 2.500z" fill="#4a4a4a"/>
</svg>
</body></html>
